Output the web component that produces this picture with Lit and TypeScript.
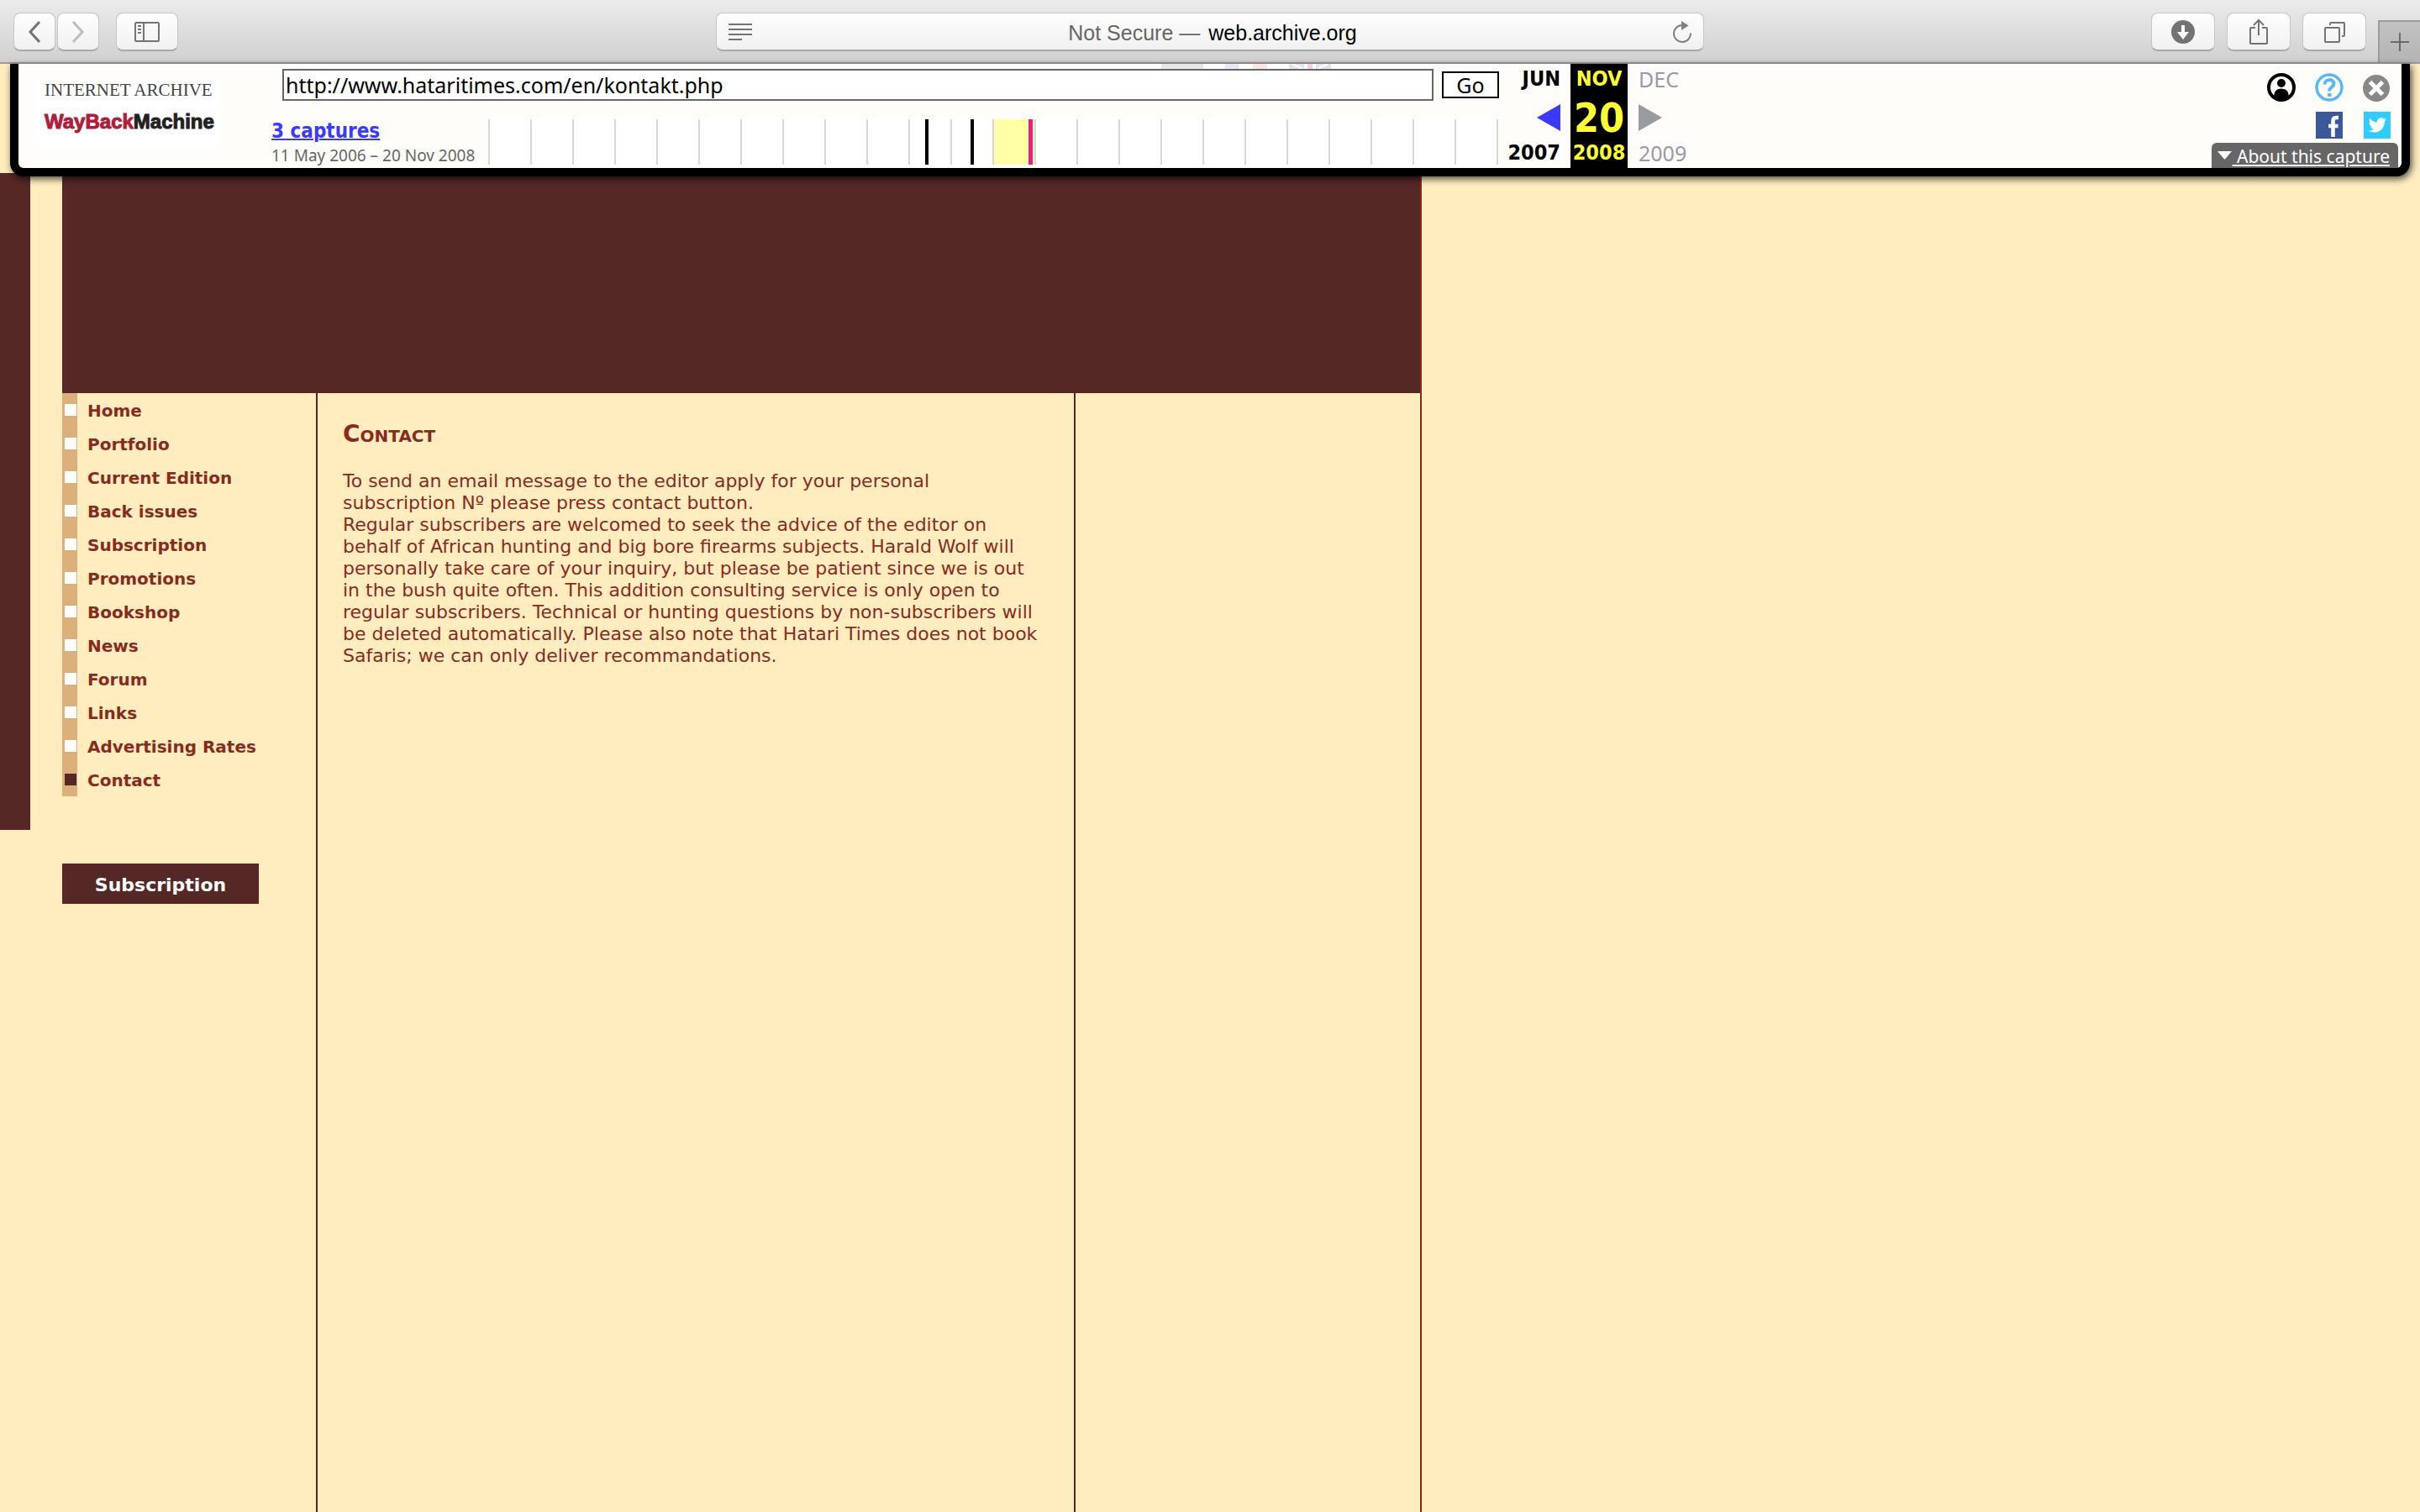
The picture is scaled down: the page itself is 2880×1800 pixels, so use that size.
import { LitElement, html, css, svg } from "lit";
import { customElement } from "lit/decorators.js";

const MENU = [
  "Home", "Portfolio", "Current Edition", "Back issues", "Subscription", "Promotions",
  "Bookshop", "News", "Forum", "Links", "Advertising Rates", "Contact",
];

@customElement("browser-bar")
class BrowserBar extends LitElement {
  static styles = css`
    :host { display: block; }
    .bar {
      display: grid; grid-template-columns: 1fr minmax(0, 1176px) 1fr; align-items: start;
      height: 76px; box-sizing: border-box; padding-top: 15px;
      border-bottom: 2px solid #9c9a9d;
      background: linear-gradient(#ebebeb, #d0d0d0);
      font-family: "Liberation Sans", Arial, sans-serif;
    }
    .left { display: flex; padding-left: 16px; gap: 2px; }
    .right { display: flex; justify-content: flex-end; gap: 14px; }
    button { font: inherit; padding: 0; margin: 0; border: 0; background: none; display: flex; align-items: center; justify-content: center; }
    .key, .address {
      height: 46px; box-sizing: border-box; border: 1px solid #c6c6c6; border-bottom: 2px solid #a9a9a9;
      border-radius: 8px; background: linear-gradient(#fefefe, #f1f1f1);
    }
    .nav { width: 50px; }
    .side { width: 74px; margin-left: 18px; }
    .tool { width: 76px; }
    .address { display: flex; align-items: center; justify-content: space-between; padding: 0 14px; }
    .where { font-size: 25px; line-height: 28px; padding-top: 2px; color: #666; gap: 10px; }
    .host { color: #000; }
    .plus { width: 50px; height: 50px; margin-top: 9px; box-sizing: border-box; border: 2px solid #9c9a9d; border-right: 0; border-bottom: 0; background: linear-gradient(#c2c2c2, #b4b4b4); }
    svg { display: block; }
  `;
  render() {
    return html`
      <div class="bar">
        <div class="left">
          <button class="key nav" aria-label="Back"><svg width="16" height="26" viewBox="0 0 16 26" fill="none" stroke="#737373" stroke-width="3"><path d="M14 1 3 13 14 25" /></svg></button>
          <button class="key nav" aria-label="Forward"><svg width="16" height="26" viewBox="0 0 16 26" fill="none" stroke="#bdbdbd" stroke-width="3"><path d="M2 1 13 13 2 25" /></svg></button>
          <button class="key side" aria-label="Sidebar"><svg width="30" height="24" viewBox="0 0 30 24" fill="none" stroke="#737373" stroke-width="2"><rect x="1" y="1" width="28" height="22" rx="1" /><path d="M11 1V23M4 5H8M4 9H8M4 13H8" /></svg></button>
        </div>
        <div class="address">
          <button aria-label="Reader"><svg width="28" height="20" viewBox="0 0 28 20" stroke="#737373" stroke-width="2"><path d="M0 1H28M0 7H28M0 13H28M0 19H16" /></svg></button>
          <button class="where"><span>Not Secure —</span><span class="host">web.archive.org</span></button>
          <button aria-label="Reload"><svg width="22" height="26" viewBox="0 0 22 26"><path d="M21 14.500A10 10 0 1 1 11 5" fill="none" stroke="#808080" stroke-width="2" /><path d="M10 0 18.500 5.500 10 11Z" fill="#808080" /></svg></button>
        </div>
        <div class="right">
          <button class="key tool" aria-label="Downloads"><svg width="28" height="28" viewBox="0 0 28 28"><circle cx="14" cy="14" r="14" fill="#737373" /><path d="M12 6H16V14H21L14 23 7 14H12Z" fill="#fff" /></svg></button>
          <button class="key tool" aria-label="Share"><svg width="24" height="32" viewBox="0 0 24 32" fill="none" stroke="#737373" stroke-width="2"><path d="M8 11H3Q2 11 2 12V29Q2 30 3 30H21Q22 30 22 29V12Q22 11 21 11H16M12 20V2M6 8 12 2 18 8" /></svg></button>
          <button class="key tool" aria-label="Tabs"><svg width="26" height="26" viewBox="0 0 26 26" fill="none" stroke="#737373" stroke-width="2"><rect x="2" y="8" width="17" height="17" rx="1" /><path d="M8 5V3Q8 2 9 2H24Q25 2 25 3V17Q25 18 24 18H22" /></svg></button>
          <button class="plus" aria-label="New tab"><svg width="22" height="22" viewBox="0 0 22 22" stroke="#6a6a6a" stroke-width="2"><path d="M11 0V22M0 11H22" /></svg></button>
        </div>
      </div>`;
  }
}

@customElement("archive-bar")
class ArchiveBar extends LitElement {
  static styles = css`
    :host { display: block; position: relative; z-index: 1; }
    .bar {
      display: flex; align-items: flex-start; height: 124px; margin: 0 12px;
      border: 10px solid #000; border-top: 0; border-radius: 0 0 16px 16px;
      background: #fffdf9; box-shadow: 2px 3px 8px rgba(0, 0, 0, 0.7);
      font-family: "Noto Sans", "Open Sans", sans-serif; font-size: 25px; line-height: 28px; color: #000;
    }
    svg { display: block; }
    button { font: inherit; padding: 0; border: 0; background: none; }
    .logo { flex: none; margin: 20px 61px 0 20px; }
    .center { flex: 0 1 1461px; min-width: 0; padding-top: 6px; position: relative; }
    .form { display: flex; align-items: center; gap: 10px; padding-left: 13px; }
    .url { flex: 1; min-width: 0; height: 38px; box-sizing: border-box; border: 2px solid #666; border-radius: 0; padding: 0 2px; margin: 0; font: inherit; background: #fff; color: #000; position: relative; }
    .go { width: 68px; height: 32px; border: 2px solid #000; background: #fff; line-height: 24px; }
    .flags { position: absolute; left: 1059px; top: 0; }
    .history { display: flex; padding-top: 22px; }
    .captures { flex: 0 0 258px; }
    .count { display: block; font-family: "DejaVu Sans Condensed", "DejaVu Sans", sans-serif; font-weight: bold; font-size: 24px; color: #3a3aff; line-height: 28px; text-decoration-thickness: 2px; }
    .span { font-size: 19px; line-height: 24px; color: #666; padding-top: 3px; white-space: nowrap; }
    .spark { flex: 1; min-width: 0; }
    .months { display: grid; grid-template-columns: 85px 68px 85px; height: 124px; font-family: "DejaVu Sans Condensed", "DejaVu Sans", sans-serif; font-weight: bold; }
    .col { display: grid; grid-template-rows: 36px 56px 28px; align-items: center; align-content: start; }
    .prev { justify-items: end; padding-right: 12px; }
    .now { background: #000; color: #ffff33; justify-items: center; }
    .next { justify-items: start; padding-left: 13px; font-family: "Noto Sans", "Open Sans", sans-serif; font-weight: normal; color: #99a; }
    .day { font-size: 48px; line-height: 56px; }
    .aside { margin-left: auto; display: flex; flex-direction: column; align-items: flex-end; gap: 5px; padding: 11px 4px 0 0; }
    .icons { display: grid; grid-template-columns: repeat(3, 34px); grid-template-rows: 34px 32px; gap: 12px 23px; padding-right: 8px; justify-items: center; }
    .fb { grid-column: 2; }
    .about { display: flex; align-items: center; height: 30px; box-sizing: border-box; padding: 0 10px 0 7px; border-radius: 6px 6px 0 0; background: #666; color: #fff; font-size: 21px; text-decoration: none; gap: 1px; }
    .about span { text-decoration: underline; white-space: pre; padding-top: 2px; }
    .small { font: 21px "Liberation Serif", serif; fill: #444; }
    .word { font: bold 24px "Liberation Sans", Arial, sans-serif; stroke-width: 1; }
    .red { fill: #b01c3c; stroke: #b01c3c; }
    .black { fill: #222; stroke: #222; }
  `;
  render() {
    const ticks = Array.from({ length: 25 }, (_, i) => i * 50);
    return html`
      <div class="bar">
        <svg class="logo" width="220" height="78" viewBox="0 0 220 78" role="img" aria-label="Internet Archive Wayback Machine">
          <rect width="220" height="78" fill="#fff" />
          <text class="small" x="11" y="18">INTERNET ARCHIVE</text>
          <text class="word" x="11" y="57"><tspan class="red">WayBack</tspan><tspan class="black">Machine</tspan></text>
        </svg>
        <div class="center">
          <svg class="flags" width="202" height="6" viewBox="0 0 202 6">
            <path fill="#e7e7ea" d="M0 0h50v6h-50z" /><path fill="#e9e8f4" d="M76 0h16v6h-16z" /><path fill="#fde4e6" d="M109 0h17v6h-17z" />
            <path fill="#e4e4ef" d="M152 0h50v6h-50z" /><path fill="#fff" d="M170 0h14v6h-14z" /><path stroke="#fff" stroke-width="2" d="M156 0 168 6M198 0 186 6" /><path fill="#fbd0d4" d="M174 0h6v6h-6z" />
          </svg>
          <form class="form" @submit=${(e: Event) => e.preventDefault()}>
            <input class="url" type="text" aria-label="Archived address" value="http://www.hataritimes.com/en/kontakt.php" />
            <button class="go">Go</button>
          </form>
          <div class="history">
            <div class="captures">
              <a class="count" href="#">3 captures</a>
              <div class="span">11 May 2006 – 20 Nov 2008</div>
            </div>
            <svg class="spark" height="54" viewBox="0 0 1203 54" preserveAspectRatio="none">
              <rect width="1203" height="54" fill="#fff" />
              <rect x="602" width="48" height="54" fill="#ffffa5" />
              ${ticks.map((x) => svg`<rect x=${x} width="2" height="54" fill="#d8d8d8" />`)}
              <rect x="520" width="4" height="54" /><rect x="574" width="4" height="54" />
              <rect x="643" width="5" height="54" fill="#ec1c8c" />
            </svg>
          </div>
        </div>
        <div class="months">
          <div class="col prev"><span>JUN</span><svg width="28" height="32" viewBox="0 0 28 32"><path d="M0 16 28 0V32Z" fill="#3a3aff" /></svg><span>2007</span></div>
          <div class="col now"><span>NOV</span><span class="day">20</span><span>2008</span></div>
          <div class="col next"><span>DEC</span><svg width="28" height="32" viewBox="0 0 28 32"><path d="M28 16 0 0V32Z" fill="#999ba0" /></svg><span>2009</span></div>
        </div>
        <div class="aside">
          <div class="icons">
            <button aria-label="Account"><svg width="34" height="34" viewBox="0 0 34 34"><circle cx="17" cy="17" r="15" fill="none" stroke="#000" stroke-width="4" /><circle cx="17" cy="12" r="5" /><path d="M8 30C8 22 11 18.500 17 18.500S26 22 26 30Q17 35 8 30Z" /></svg></button>
            <button aria-label="Help"><svg width="34" height="34" viewBox="0 0 34 34"><circle cx="17" cy="17" r="15" fill="none" stroke="#5ab8f5" stroke-width="3.500" /><path d="M11.500 13.500C11.500 6.500 22.500 6.500 22.500 12.500C22.500 17 17 16.500 17 21.500" fill="none" stroke="#5ab8f5" stroke-width="4" /><rect x="15" y="24" width="4.500" height="4" fill="#5ab8f5" /></svg></button>
            <button aria-label="Close"><svg width="34" height="34" viewBox="0 0 34 34"><circle cx="16" cy="18" r="16" fill="#888" /><path d="M8.500 10.500 23.500 25.500M23.500 10.500 8.500 25.500" stroke="#fff" stroke-width="5" /></svg></button>
            <button class="fb" aria-label="Share on Facebook"><svg width="32" height="32" viewBox="0 0 32 32"><rect width="32" height="32" fill="#3b5998" /><path d="M20.500 30V11Q20.500 7 24 7H27M15 17H26.500" fill="none" stroke="#fff" stroke-width="4.500" /></svg></button>
            <button aria-label="Share on Twitter"><svg width="32" height="32" viewBox="0 0 32 32"><rect width="32" height="32" fill="#2fccff" /><path d="M27 9.200c-.8.400-1.600.6-2.500.7.900-.6 1.600-1.400 1.900-2.400-.8.500-1.800.9-2.700 1.100a4.400 4.400 0 0 0-7.500 4c-3.600-.2-6.900-1.900-9-4.600-1.200 2-.5 4.500 1.300 5.800-.7 0-1.400-.2-2-.5 0 2.100 1.500 3.900 3.500 4.400-.6.200-1.300.2-2 .1.600 1.700 2.200 3 4.100 3-1.800 1.400-4.100 2.100-6.500 1.800 2 1.300 4.300 2 6.800 2 8.200 0 12.800-7 12.500-13.200.8-.6 1.600-1.400 2.100-2.200Z" fill="#fff" /></svg></button>
          </div>
          <a class="about" href="#"><svg width="17" height="10" viewBox="0 0 17 10"><path d="M0 0H17L8.500 10Z" fill="#fff" /></svg><span> About this capture</span></a>
        </div>
      </div>`;
  }
}

@customElement("app-root")
class AppRoot extends LitElement {
  static styles = css`
    :host { display: flex; flex-direction: column; min-height: 100vh; background: #ffedc0; font-family: "DejaVu Sans", Verdana, sans-serif; color: #862c1f; }
    .site { flex: 1; display: flex; gap: 38px; margin-top: -4px; }
    .edge { flex: 0 0 36px; height: 782px; background: #552826; }
    .sheet { flex: 0 1 1616px; min-width: 0; border-right: 2px solid #862c1f; display: flex; flex-direction: column; }
    .banner { height: 262px; background: #552826; }
    .columns { flex: 1; display: grid; grid-template-columns: 302px minmax(0, 1fr) 410px; }
    .article { border: solid #552826; border-width: 0 2px; padding: 30px 38px 30px 30px; font-size: 22px; line-height: 26px; }
    h1 { margin: 0 0 24px; font-size: 28px; line-height: 38px; font-variant: small-caps; }
    p { margin: 0; }
    ul { list-style: none; margin: 0; padding: 0; }
    .item { display: flex; align-items: stretch; height: 40px; }
    .mark { flex: 0 0 18px; display: grid; place-items: center; padding-left: 2px; box-sizing: border-box; background: #dcb07b; }
    .mark::before { content: ""; width: 14px; height: 14px; background: #fff; }
    .current .mark::before { background: #552826; }
    .link { padding-left: 12px; font-size: 20px; line-height: 42px; font-weight: bold; color: inherit; text-decoration: none; }
    .order { display: block; width: 234px; height: 48px; box-sizing: border-box; padding-top: 2px; margin-top: 80px; background: #552826; color: #fff; font-size: 22px; line-height: 48px; font-weight: bold; text-align: center; text-decoration: none; }
  `;
  render() {
    return html`
      <browser-bar></browser-bar>
      <archive-bar></archive-bar>
      <div class="site">
        <div class="edge"></div>
        <div class="sheet">
          <div class="banner"></div>
          <div class="columns">
            <nav>
              <ul>
                ${MENU.map((t) => html`<li class="item ${t === "Contact" ? "current" : ""}"><span class="mark"></span><a class="link" href="#">${t}</a></li>`)}
              </ul>
              <a class="order" href="#">Subscription</a>
            </nav>
            <main class="article">
              <h1>Contact</h1>
              <p>To send an email message to the editor apply for your personal subscription Nº please press contact button.</p>
              <p>Regular subscribers are welcomed to seek the advice of the editor on behalf of African hunting and big bore firearms subjects. Harald Wolf will personally take care of your inquiry, but please be patient since we is out in the bush quite often. This addition consulting service is only open to regular subscribers. Technical or hunting questions by non-subscribers will be deleted automatically. Please also note that Hatari Times does not book Safaris; we can only deliver recommandations.</p>
            </main>
            <aside></aside>
          </div>
        </div>
      </div>`;
  }
}
